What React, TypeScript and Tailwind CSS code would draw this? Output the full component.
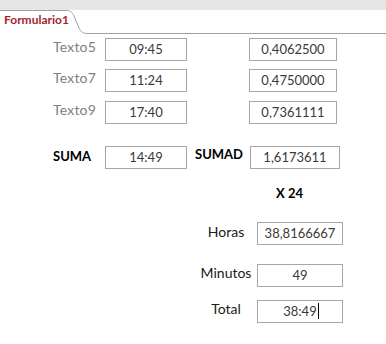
import React from "react";

const F = { fontFamily: "Lato, 'Open Sans', sans-serif" };

function Box({ w, children, caret }: { w: string; children: React.ReactNode; caret?: boolean }) {
  return (
    <div className={`${w} h-[23px] border border-[#a6a6a6] flex items-center justify-center text-[13px] text-[#3a3a3a] leading-none`}>
      <span className="relative">
        {children}
        {caret && <span className="absolute right-[-2px] top-[-2px] w-[1px] h-[16px] bg-black" />}
      </span>
    </div>
  );
}

export default function App() {
  return (
    <div className="w-[386px] h-[344px] bg-white overflow-hidden" style={F}>
      <div className="h-[10px] bg-[#e6e6e6]" />
      <div className="relative h-[24px]">
        <svg className="absolute inset-0" width="386" height="24" viewBox="0 0 386 24">
          <path d="M0 0.5 H66 C70 0.5 72 2 74 6 L79 18 C81 22 83 23.5 88 23.5 H386" fill="none" stroke="#a0a0a0" strokeWidth="1" />
        </svg>
        <span className="absolute left-[4px] top-[4px] text-[12px] font-bold text-[#a4262c] leading-none">Formulario1</span>
      </div>

      <div className="pt-[4px] pl-[53px]">
        {[
          ["Texto5", "09:45", "0,4062500"],
          ["Texto7", "11:24", "0,4750000"],
          ["Texto9", "17:40", "0,7361111"],
        ].map(([l, a, b], i) => (
          <div key={l} className={`flex items-start ${i === 1 ? "mt-[8px]" : i === 2 ? "mt-[9px]" : ""}`}>
            <span className="w-[52px] text-[14px] text-[#7f7f7f] leading-none pt-[2px] tracking-[0.2px]">{l}</span>
            <Box w="w-[82px]">{a}</Box>
            <div className="w-[62px]" />
            <Box w="w-[88px]">{b}</Box>
          </div>
        ))}

        <div className="flex items-start mt-[22px]">
          <span className="w-[52px] text-[13px] font-bold text-black leading-none pt-[4px]">SUMA</span>
          <Box w="w-[82px]">14:49</Box>
          <span className="w-[63px] pl-[8px] text-[13px] font-bold text-black leading-none pt-[2px]">SUMAD</span>
          <Box w="w-[90px]">1,6173611</Box>
        </div>
      </div>

      <div className="pl-[276px] mt-[18px] text-[13px] font-bold text-black leading-none">X 24</div>

      <div className="pl-[195px]">
        <div className="flex items-start mt-[22px]">
          <span className="w-[62px] text-center text-[14px] text-[#1a1a1a] leading-none pt-[3px]">Horas</span>
          <Box w="w-[86px]">38,8166667</Box>
        </div>
        <div className="flex items-start mt-[19px]">
          <span className="w-[62px] text-center text-[14px] text-[#1a1a1a] leading-none pt-[2px]">Minutos</span>
          <Box w="w-[86px]">49</Box>
        </div>
        <div className="flex items-start mt-[13px]">
          <span className="w-[62px] text-center text-[14px] text-[#1a1a1a] leading-none pt-[2px]">Total</span>
          <Box w="w-[86px]" caret>38:49</Box>
        </div>
      </div>
    </div>
  );
}
